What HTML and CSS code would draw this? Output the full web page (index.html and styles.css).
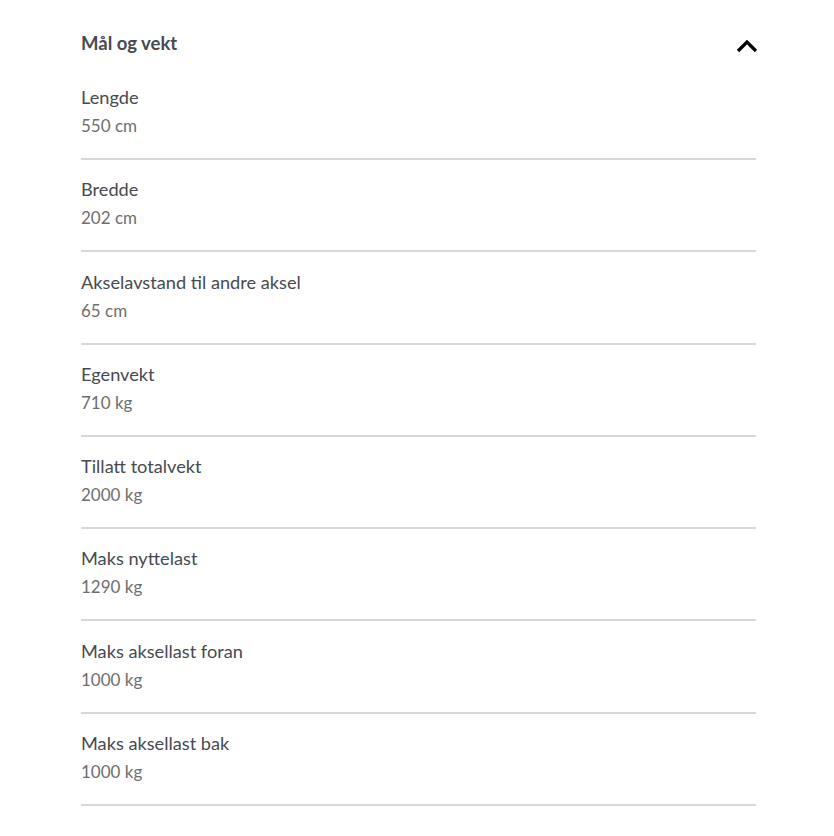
FILE: index.html
```html
<!DOCTYPE html>
<html lang="no">
  <head>
    <meta charset="UTF-8" />
    <meta name="viewport" content="width=device-width, initial-scale=1.0" />
    <title>Mål og vekt</title>
    <link rel="stylesheet" href="styles.css">
  </head>
  <body>
    <section class="specs">
      <div class="specs-header">
        <h2>Mål og vekt</h2>
        <svg class="chevron" width="22" height="14" viewBox="0 0 22 14">
          <path d="M2 12 L11 3 L20 12" fill="none" stroke="#000" stroke-width="3.2" />
        </svg>
      </div>
      <dl class="spec-list">
        <div class="spec-row"><dt>Lengde</dt><dd>550 cm</dd></div>
        <div class="spec-row"><dt>Bredde</dt><dd>202 cm</dd></div>
        <div class="spec-row"><dt>Akselavstand til andre aksel</dt><dd>65 cm</dd></div>
        <div class="spec-row"><dt>Egenvekt</dt><dd>710 kg</dd></div>
        <div class="spec-row"><dt>Tillatt totalvekt</dt><dd>2000 kg</dd></div>
        <div class="spec-row"><dt>Maks nyttelast</dt><dd>1290 kg</dd></div>
        <div class="spec-row"><dt>Maks aksellast foran</dt><dd>1000 kg</dd></div>
        <div class="spec-row"><dt>Maks aksellast bak</dt><dd>1000 kg</dd></div>
      </dl>
    </section>
  </body>
</html>
```

FILE: styles.css
```css
body {
  margin: 0;
  padding: 0;
  background: #fff;
  font-family: Lato, "Open Sans", Arial, sans-serif;
  color: #474a50;
}

.specs {
  width: 675px;
  margin: 0 auto;
  padding-top: 24px;
  padding-left: 3px;
}

.specs-header {
  display: flex;
  justify-content: space-between;
  align-items: center;
  height: 38px;
  margin-bottom: 21px;
}

.specs-header h2 {
  margin: 0;
  font-size: 18.5px;
  font-weight: bold;
  color: #474a50;
}

.chevron {
  margin-top: 6px;
  margin-right: -2px;
}

.spec-list {
  margin: 0;
}

.spec-row {
  padding: 0 0 18px;
  border-bottom: 2px solid #d8d8d8;
  margin-bottom: 15.3px;
}

.spec-row dt {
  font-size: 18.2px;
  line-height: 28px;
  color: #474a50;
}

.spec-row dd {
  margin: 0;
  font-size: 17px;
  line-height: 29px;
  color: #6e6e6e;
}
```
